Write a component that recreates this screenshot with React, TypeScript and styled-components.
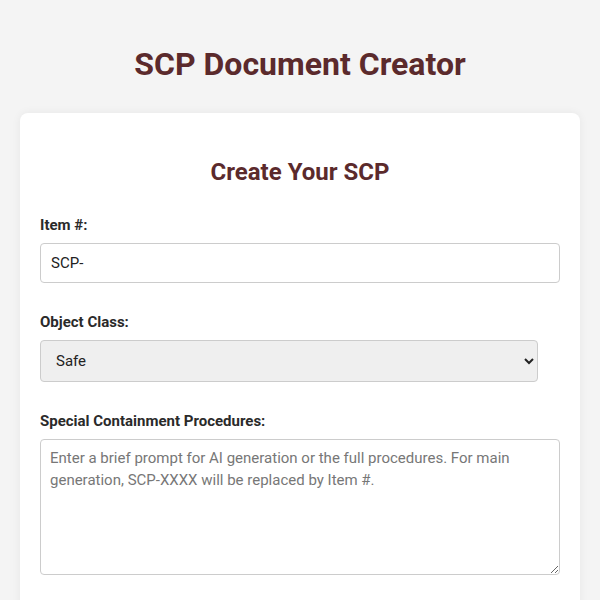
import React from "react";
import styled, { createGlobalStyle } from "styled-components";

const GlobalStyle = createGlobalStyle`
  html, body {
    margin: 0;
    padding: 0;
    background: #f4f4f4;
    font-family: Roboto, "Liberation Sans", Arial, sans-serif;
    color: #222;
  }
  * { box-sizing: border-box; }
`;

const Page = styled.div`
  padding: 0 20px 20px;
`;

const Title = styled.h1`
  margin: 0;
  padding: 46px 0 30px;
  line-height: 37px;
  text-align: center;
  font-size: 32px;
  font-weight: 700;
  color: #5b2a2c;
`;

const Card = styled.div`
  background: #fff;
  border-radius: 8px;
  box-shadow: 0 0 10px rgba(0, 0, 0, 0.06);
  padding: 20px;
`;

const CardTitle = styled.h2`
  margin: 25px 0 30px;
  line-height: 28px;
  text-align: center;
  font-size: 24px;
  font-weight: 700;
  color: #5b2a2c;
`;

const Field = styled.div`
  margin-bottom: 30px;
`;

const Label = styled.label`
  display: block;
  margin-bottom: 9px;
  line-height: 18px;
  font-size: 15px;
  font-weight: 700;
  color: #2a2a2a;
`;

const TextInput = styled.input`
  display: block;
  width: 100%;
  height: 40px;
  padding: 0 10px;
  border: 1px solid #ccc;
  border-radius: 4px;
  font: inherit;
  font-size: 15px;
  color: #222;
  background: #fff;
`;

const Select = styled.select`
  display: block;
  width: 498px;
  height: 42px;
  padding: 0 11px;
  border: 1px solid #ccc;
  border-radius: 4px;
  font: inherit;
  font-size: 15px;
  color: #222;
  background: #efefef;
`;

const TextArea = styled.textarea`
  display: block;
  width: 100%;
  height: 136px;
  padding: 7px 9px;
  border: 1px solid #ccc;
  border-radius: 4px;
  font: inherit;
  font-size: 15px;
  line-height: 22px;
  color: #222;
  resize: vertical;
  &::placeholder {
    color: #777;
  }
`;

export default function App() {
  return (
    <>
      <GlobalStyle />
      <Page>
        <Title>SCP Document Creator</Title>
        <Card>
          <CardTitle>Create Your SCP</CardTitle>
          <Field>
            <Label htmlFor="item">Item #:</Label>
            <TextInput id="item" defaultValue="SCP-" />
          </Field>
          <Field>
            <Label htmlFor="cls">Object Class:</Label>
            <Select id="cls" defaultValue="Safe">
              <option>Safe</option>
              <option>Euclid</option>
              <option>Keter</option>
              <option>Thaumiel</option>
              <option>Neutralized</option>
            </Select>
          </Field>
          <Field>
            <Label htmlFor="scp">Special Containment Procedures:</Label>
            <TextArea
              id="scp"
              placeholder="Enter a brief prompt for AI generation or the full procedures. For main generation, SCP-XXXX will be replaced by Item #."
            />
          </Field>
        </Card>
      </Page>
    </>
  );
}
